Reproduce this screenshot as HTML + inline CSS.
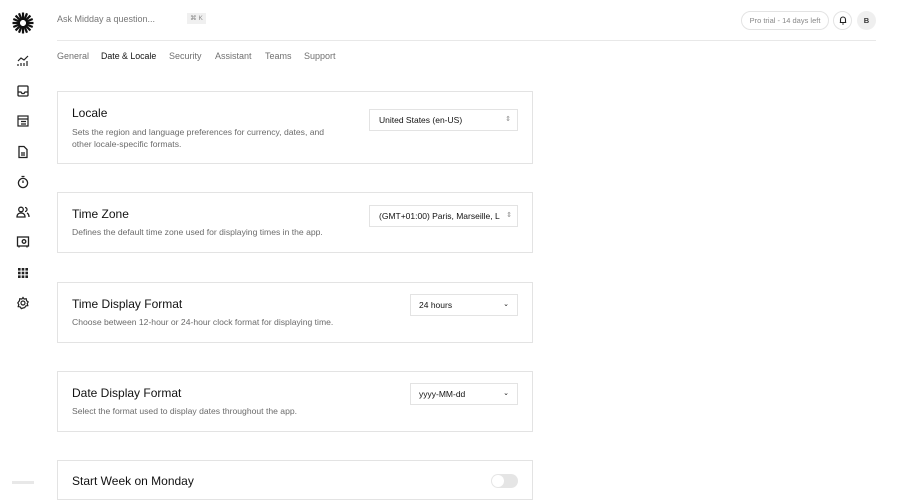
<!DOCTYPE html>
<html><head><style>
*{box-sizing:border-box;margin:0;padding:0}
body{width:900px;height:484px;overflow:hidden;background:#fff;font-family:"Liberation Sans",sans-serif;color:#121212;position:relative}
.a{position:absolute}
.ic{position:absolute;left:16px;width:14px;height:14px}
.card{position:absolute;left:57px;width:476px;border:1px solid #e3e3e3}
.t{position:absolute;left:14px;font-size:12px;color:#121212}
.d{position:absolute;left:14px;font-size:8.6px;color:#6b6b6b;line-height:12px}
.sel{position:absolute;border:1px solid #e3e3e3;height:22px;font-size:8.5px;padding-left:9px;line-height:20px;color:#121212;overflow:hidden;white-space:nowrap}
.tab{position:absolute;top:51px;font-size:9px;color:#707070}
</style></head><body>
<svg class="a" style="left:12px;top:12px" width="22" height="22" viewBox="-11 -11 22 22"><g stroke="#111" stroke-width="2.2">
<line x1="0" y1="-3" x2="0" y2="-10.5" transform="rotate(0)"/><line x1="0" y1="-3" x2="0" y2="-10.5" transform="rotate(22.5)"/><line x1="0" y1="-3" x2="0" y2="-10.5" transform="rotate(45)"/><line x1="0" y1="-3" x2="0" y2="-10.5" transform="rotate(67.5)"/><line x1="0" y1="-3" x2="0" y2="-10.5" transform="rotate(90)"/><line x1="0" y1="-3" x2="0" y2="-10.5" transform="rotate(112.5)"/><line x1="0" y1="-3" x2="0" y2="-10.5" transform="rotate(135)"/><line x1="0" y1="-3" x2="0" y2="-10.5" transform="rotate(157.5)"/><line x1="0" y1="-3" x2="0" y2="-10.5" transform="rotate(180)"/><line x1="0" y1="-3" x2="0" y2="-10.5" transform="rotate(202.5)"/><line x1="0" y1="-3" x2="0" y2="-10.5" transform="rotate(225)"/><line x1="0" y1="-3" x2="0" y2="-10.5" transform="rotate(247.5)"/><line x1="0" y1="-3" x2="0" y2="-10.5" transform="rotate(270)"/><line x1="0" y1="-3" x2="0" y2="-10.5" transform="rotate(292.5)"/><line x1="0" y1="-3" x2="0" y2="-10.5" transform="rotate(315)"/><line x1="0" y1="-3" x2="0" y2="-10.5" transform="rotate(337.5)"/></g></svg>
<svg class="ic" style="top:54px" viewBox="0 0 14 14" fill="none" stroke="#222" stroke-width="1.2"><path d="M2 7l3-3 3 2 4-4"/><path d="M2 12v-2M5 12V9M8 12V9M11 12V7"/></svg>
<svg class="ic" style="top:84px" viewBox="0 0 14 14" fill="none" stroke="#222" stroke-width="1.3"><rect x="2" y="2" width="10" height="10" rx="1"/><path d="M2 8h3l1 1.5h2L9 8h3"/></svg>
<svg class="ic" style="top:114px" viewBox="0 0 14 14" fill="none" stroke="#222" stroke-width="1.2"><rect x="2" y="2" width="10" height="10"/><path d="M2 5h10M5 7.5h5M5 10h5"/></svg>
<svg class="ic" style="top:145px" viewBox="0 0 14 14" fill="none" stroke="#222" stroke-width="1.3"><path d="M3 1.5h5l3 3V12.5H3z"/><path d="M5 8h4M5 10h4"/></svg>
<svg class="ic" style="top:175px" viewBox="0 0 14 14" fill="none" stroke="#222" stroke-width="1.3"><circle cx="7" cy="8" r="4.6"/><path d="M5.5 1.5h3M7 8V5.5"/></svg>
<svg class="ic" style="top:205px" viewBox="0 0 14 14" fill="none" stroke="#222" stroke-width="1.3"><circle cx="5" cy="4.5" r="2.3"/><path d="M1 12c0-3 2-4 4-4s4 1 4 4z"/><path d="M9 2.5a2 2 0 010 4M11 8c1.5.8 2 2 2 4"/></svg>
<svg class="ic" style="top:235px" viewBox="0 0 14 14" fill="none" stroke="#222" stroke-width="1.3"><rect x="1.5" y="2" width="11" height="9"/><circle cx="8" cy="6.5" r="1.8"/><path d="M3 11v1.5M11 11v1.5"/></svg>
<svg class="ic" style="top:266px" viewBox="0 0 14 14" fill="#222"><rect x="2" y="2" width="2.6" height="2.6"/><rect x="5.7" y="2" width="2.6" height="2.6"/><rect x="9.4" y="2" width="2.6" height="2.6"/><rect x="2" y="5.7" width="2.6" height="2.6"/><rect x="5.7" y="5.7" width="2.6" height="2.6"/><rect x="9.4" y="5.7" width="2.6" height="2.6"/><rect x="2" y="9.4" width="2.6" height="2.6"/><rect x="5.7" y="9.4" width="2.6" height="2.6"/><rect x="9.4" y="9.4" width="2.6" height="2.6"/></svg>
<svg class="ic" style="top:296px" viewBox="0 0 14 14" fill="none" stroke="#222" stroke-width="1.2"><circle cx="7" cy="7" r="2"/><path d="M7 1.5l1.2 1.6 2-.4.4 2 1.6 1.2-1 1.7.6 2-2 .3-1.1 1.7L7 12l-1.7.6-1.1-1.7-2-.3.6-2-1-1.7L3.4 4.7l.4-2 2 .4z"/></svg>
<div class="a" style="left:12px;top:481px;width:22px;height:3px;background:#e8e8e8"></div>

<div class="a" style="left:57px;top:14px;font-size:9px;color:#777">Ask Midday a question...</div>
<div class="a" style="left:187px;top:13px;width:19px;height:11px;background:#f0f0f0;font-size:6.5px;color:#888;text-align:center;line-height:11px">⌘ K</div>
<div class="a" style="left:741px;top:11px;width:88px;height:19px;border:1px solid #e3e3e3;border-radius:10px;font-size:7.5px;color:#888;text-align:center;line-height:17px">Pro trial - 14 days left</div>
<div class="a" style="left:833px;top:11px;width:19px;height:19px;border:1px solid #e3e3e3;border-radius:50%"></div>
<svg class="a" style="left:838px;top:15px" width="10" height="10" viewBox="0 0 10 10" fill="none" stroke="#222" stroke-width="1.1"><path d="M2.5 7.5V4.5a2.5 2.5 0 015 0v3zM1.8 7.5h6.4M4.2 9h1.6"/></svg>
<div class="a" style="left:857px;top:11px;width:19px;height:19px;background:#efefef;border-radius:50%;font-size:7.5px;text-align:center;line-height:19px;font-weight:bold;color:#333">B</div>
<div class="a" style="left:57px;top:40px;width:819px;height:1px;background:#e8e8e8"></div>

<div class="tab" style="left:57px">General</div>
<div class="tab" style="left:101px;color:#121212;font-size:8.8px">Date &amp; Locale</div>
<div class="tab" style="left:169px">Security</div>
<div class="tab" style="left:215px">Assistant</div>
<div class="tab" style="left:265px">Teams</div>
<div class="tab" style="left:304px">Support</div>

<div class="card" style="top:91px;height:73px">
<div class="t" style="top:14px">Locale</div>
<div class="d" style="top:34px">Sets the region and language preferences for currency, dates, and<br>other locale-specific formats.</div>
<div class="sel" style="left:311px;top:17px;width:149px">United States (en-US)<span style="position:absolute;right:6px;color:#888;font-size:7px">⇕</span></div>
</div>
<div class="card" style="top:192px;height:61px">
<div class="t" style="top:14px">Time Zone</div>
<div class="d" style="top:33px">Defines the default time zone used for displaying times in the app.</div>
<div class="sel" style="left:311px;top:12px;width:149px">(GMT+01:00) Paris, Marseille, L<span style="position:absolute;right:0;top:0;width:16px;height:20px;background:#fff;color:#888;font-size:7px;text-align:center">⇕</span></div>
</div>
<div class="card" style="top:282px;height:61px">
<div class="t" style="top:14px">Time Display Format</div>
<div class="d" style="top:33px">Choose between 12-hour or 24-hour clock format for displaying time.</div>
<div class="sel" style="left:352px;top:11px;width:108px;padding-left:8px">24 hours<span style="position:absolute;right:8px;font-size:7px">⌄</span></div>
</div>
<div class="card" style="top:371px;height:61px">
<div class="t" style="top:14px">Date Display Format</div>
<div class="d" style="top:33px">Select the format used to display dates throughout the app.</div>
<div class="sel" style="left:352px;top:11px;width:108px;padding-left:8px">yyyy-MM-dd<span style="position:absolute;right:8px;font-size:7px">⌄</span></div>
</div>
<div class="card" style="top:460px;height:40px">
<div class="t" style="top:13px">Start Week on Monday</div>
<div class="a" style="left:433px;top:13px;width:27px;height:14px;border-radius:7px;background:#e5e5e5"></div>
<div class="a" style="left:434px;top:14px;width:12px;height:12px;border-radius:50%;background:#fff"></div>
</div>
</body></html>
